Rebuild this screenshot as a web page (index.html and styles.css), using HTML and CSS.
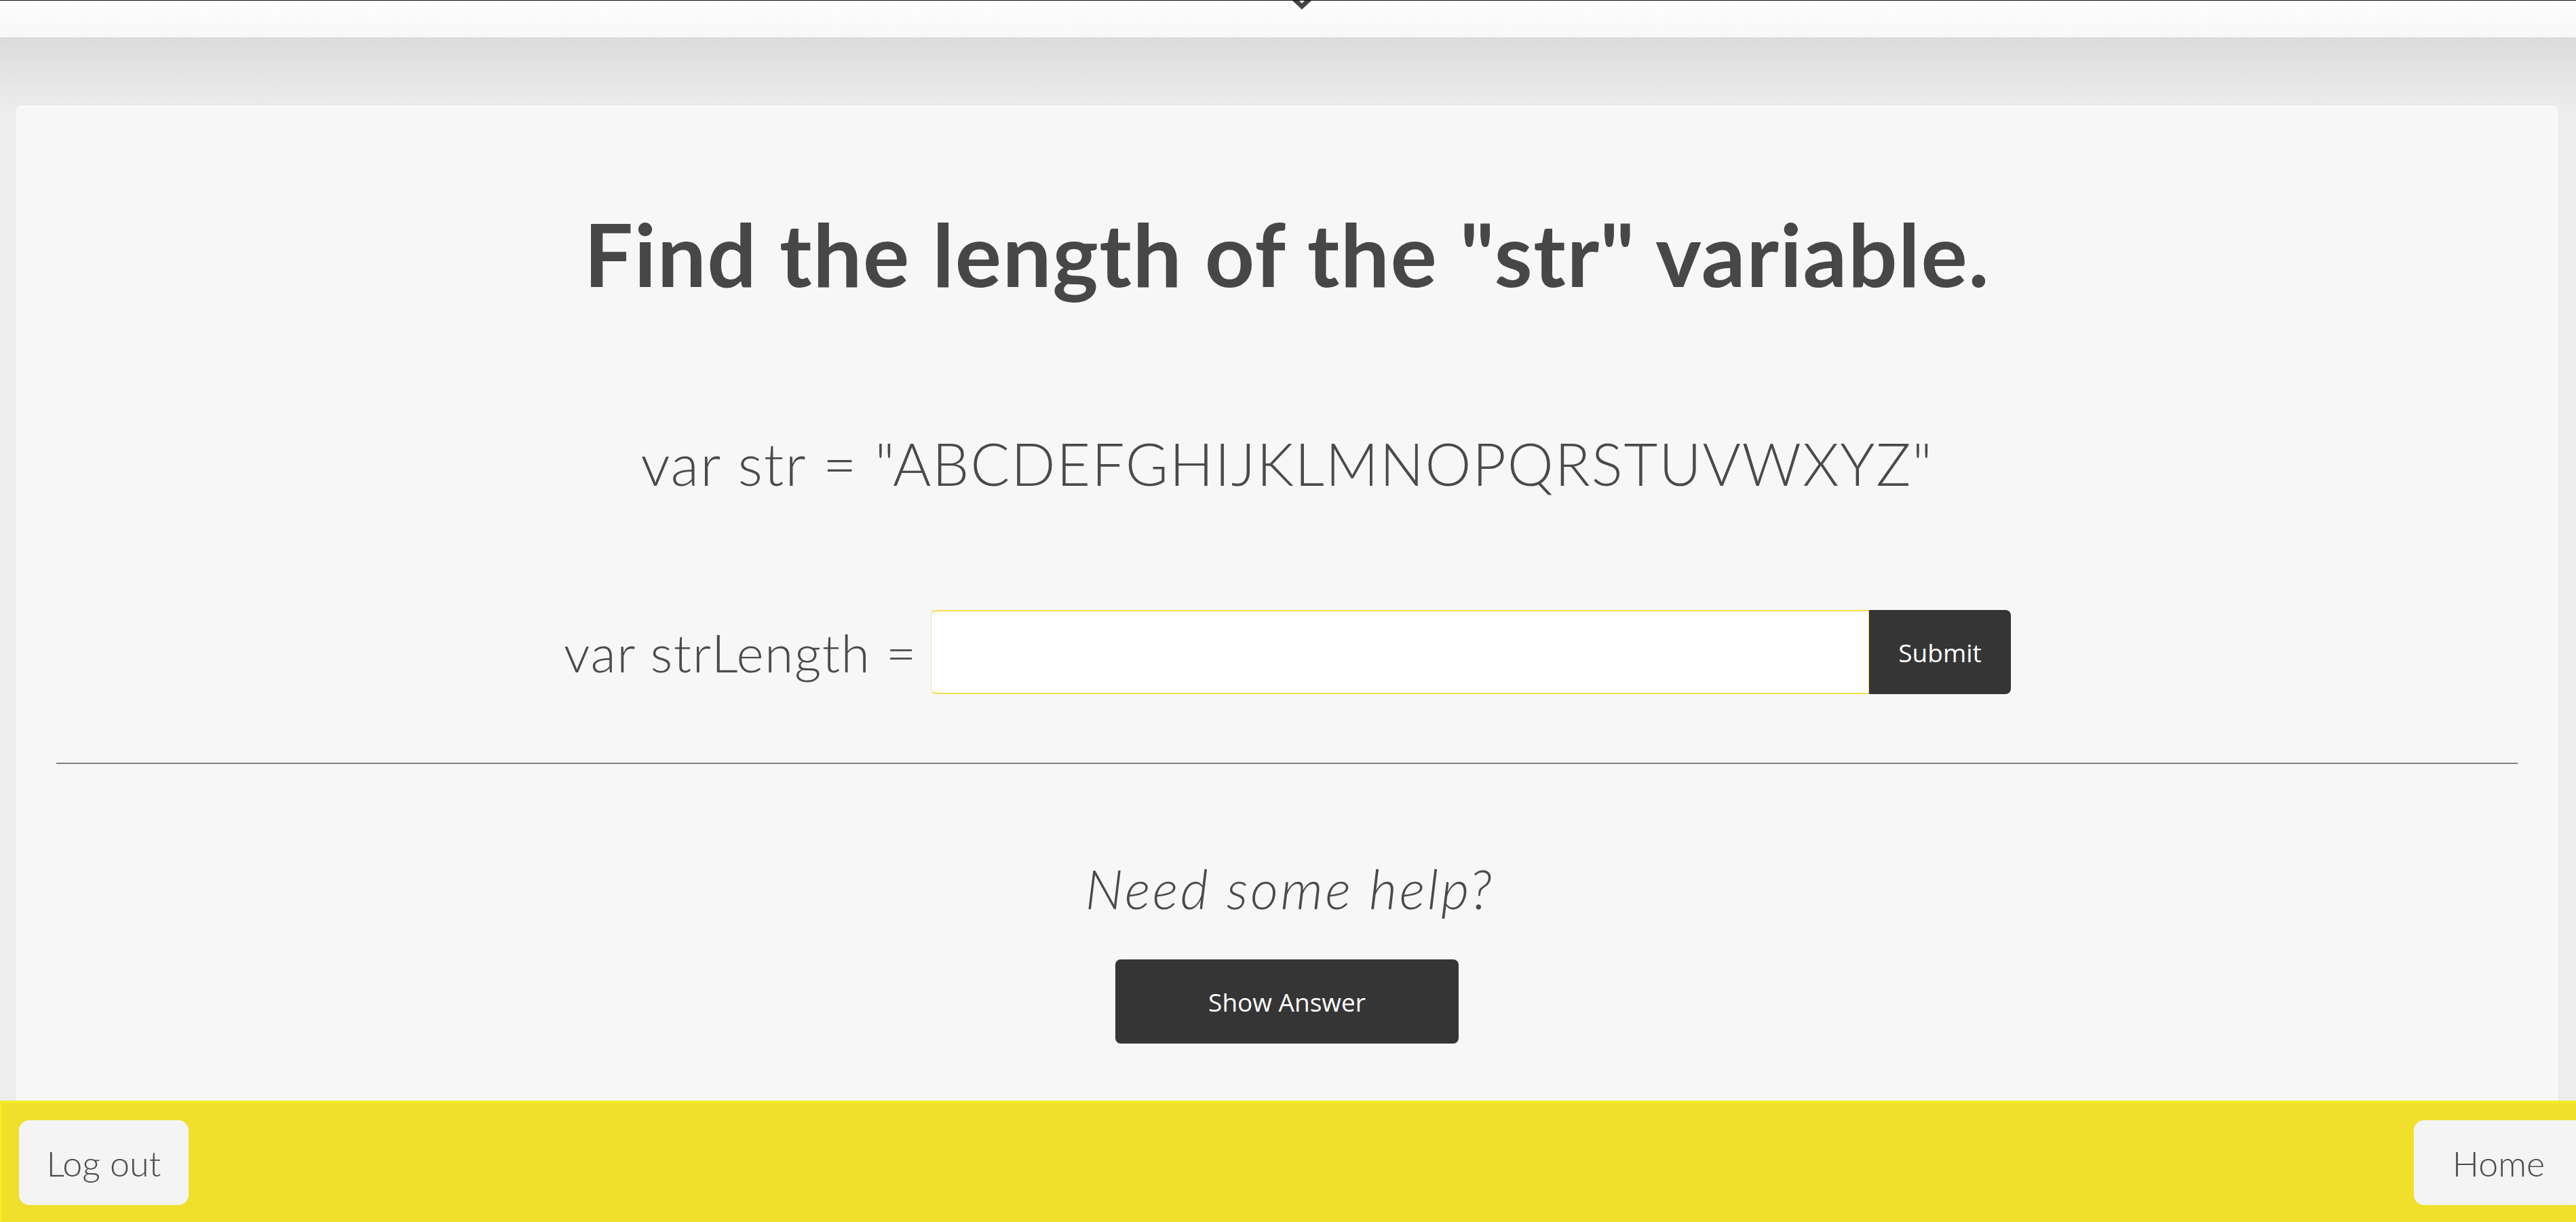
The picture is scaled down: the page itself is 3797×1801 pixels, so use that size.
FILE: index.html
```html
<!DOCTYPE html>
<html lang="en">
<head>
<meta charset="utf-8">
<title>Find the length</title>
<link rel="stylesheet" href="styles.css">
</head>
<body>
<header class="topbar">
  <svg class="tab-arrow" width="28" height="14" viewBox="0 0 28 14" aria-hidden="true">
    <polygon points="0,0 14,13 28,0 18,0 14,4 10,0" fill="#444444"/>
  </svg>
</header>
<main class="card">
  <h1 class="question">Find the length of the "str" variable.</h1>
  <p class="given">var str = "ABCDEFGHIJKLMNOPQRSTUVWXYZ"</p>
  <form class="answer-row" onsubmit="return false">
    <label class="answer-label" for="answer">var strLength =</label>
    <input class="answer-input" id="answer" type="text">
    <button class="submit-btn" type="submit">Submit</button>
  </form>
  <hr class="divider">
  <p class="help">Need some help?</p>
  <button class="show-btn" type="button">Show Answer</button>
</main>
<footer class="bottombar">
  <button class="nav-btn" type="button">Log out</button>
  <button class="nav-btn home" type="button">Home</button>
</footer>
</body>
</html>
```
FILE: styles.css
```css
html, body {
  margin: 0;
  padding: 0;
}
body {
  background-color: #ededed;
  background-image: linear-gradient(to bottom, #dcdcdc 0, #dcdcdc 55px, #ebebeb 155px, #ededed 156px);
  background-repeat: no-repeat;
  font-family: "Lato", "Noto Sans", sans-serif;
  color: #4a4a4a;
  min-height: 1801px;
  overflow: hidden;
}
.topbar {
  position: relative;
  height: 54px;
  border-top: 1px solid #111111;
  background: linear-gradient(to bottom, #fefefe, #f7f7f7);
}
.tab-arrow {
  position: absolute;
  top: 0;
  left: calc(50% + 6px);
}
.card {
  margin: 100px 26px 0 23px;
  background: #f7f7f7;
  border-radius: 8px;
  box-shadow: 0 0 3px rgba(0, 0, 0, 0.06);
  padding: 144px 60px 160px;
  display: flex;
  flex-direction: column;
  align-items: center;
}
.question {
  margin: 0;
  font-size: 128px;
  line-height: 150px;
  font-weight: 700;
  letter-spacing: 1.5px;
  color: #474747;
  white-space: nowrap;
}
.given {
  margin: 184px 0 0;
  font-size: 86px;
  line-height: 100px;
  font-weight: 300;
  letter-spacing: 1.8px;
  white-space: nowrap;
}
.answer-row {
  margin: 166px 0 0 1px;
  display: flex;
  align-items: center;
}
.answer-label {
  font-size: 77px;
  font-weight: 300;
  letter-spacing: 1.5px;
  margin-right: 20px;
  white-space: nowrap;
}
.answer-input {
  box-sizing: border-box;
  width: 1383px;
  height: 124px;
  border: 2px solid #efe04a;
  border-left: 1px solid #e4e0c2;
  border-right: 1px solid #efe04a;
  border-radius: 8px 0 0 8px;
  background: #ffffff;
  outline: none;
  margin: 0;
  font-size: 60px;
  padding: 0 20px;
}
.submit-btn {
  box-sizing: border-box;
  width: 209px;
  height: 124px;
  border: none;
  border-radius: 0 8px 8px 0;
  background: #353535;
  color: #ffffff;
  font-family: "Open Sans", "Noto Sans", sans-serif;
  font-size: 37px;
  margin: 0;
  padding: 0;
}
.divider {
  align-self: stretch;
  margin: 101px 0 0;
  border: none;
  border-top: 2px solid #808080;
  height: 0;
}
.help {
  margin: 138px 0 0;
  font-size: 80px;
  line-height: 90px;
  font-weight: 300;
  font-style: italic;
  letter-spacing: 3.5px;
  padding-left: 8px;
}
.show-btn {
  margin: 60px 0 0;
  width: 506px;
  height: 124px;
  border: none;
  border-radius: 8px;
  background: #353535;
  color: #ffffff;
  font-family: "Open Sans", "Noto Sans", sans-serif;
  font-size: 37px;
}
.bottombar {
  position: fixed;
  left: 0;
  right: 0;
  bottom: 0;
  height: 179px;
  box-sizing: border-box;
  border-top: 4px solid #f4ec2a;
  border-left: 3px solid #f4ec2a;
  background: #f0df2b;
  padding: 25px 0 0 25px;
  display: flex;
  justify-content: space-between;
  align-items: flex-start;
  overflow: hidden;
}
.nav-btn {
  width: 250px;
  height: 125px;
  border: none;
  border-radius: 15px;
  background: #f4f4f4;
  color: #4a4a4a;
  font-family: "Lato", "Noto Sans", sans-serif;
  font-weight: 300;
  font-size: 52px;
  padding: 0;
  flex-shrink: 0;
}
.nav-btn.home {
  margin-right: -11px;
}
```
